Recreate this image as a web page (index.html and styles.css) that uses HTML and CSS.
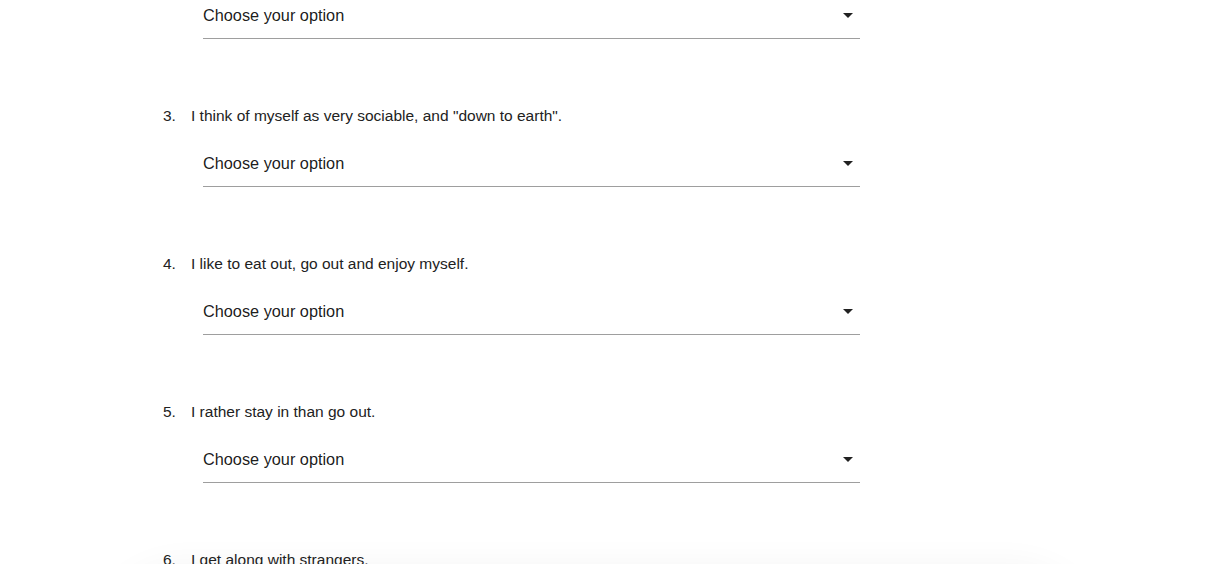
FILE: index.html
```html
<!DOCTYPE html>
<html lang="en">
<head>
<meta charset="utf-8">
<title>Questionnaire</title>
<link rel="stylesheet" href="styles.css">
</head>
<body>
<main class="page">
  <ol class="questions">
    <li class="question question-partial">
      <div class="select">
        <span class="select-value">Choose your option</span>
        <svg class="caret" width="24" height="24" viewBox="0 0 24 24"><path d="M7 10l5 5 5-5z"/></svg>
      </div>
    </li>
    <li class="question">
      <div class="label"><span class="num">3.</span><span class="text">I think of myself as very sociable, and "down to earth".</span></div>
      <div class="select">
        <span class="select-value">Choose your option</span>
        <svg class="caret" width="24" height="24" viewBox="0 0 24 24"><path d="M7 10l5 5 5-5z"/></svg>
      </div>
    </li>
    <li class="question">
      <div class="label"><span class="num">4.</span><span class="text">I like to eat out, go out and enjoy myself.</span></div>
      <div class="select">
        <span class="select-value">Choose your option</span>
        <svg class="caret" width="24" height="24" viewBox="0 0 24 24"><path d="M7 10l5 5 5-5z"/></svg>
      </div>
    </li>
    <li class="question">
      <div class="label"><span class="num">5.</span><span class="text">I rather stay in than go out.</span></div>
      <div class="select">
        <span class="select-value">Choose your option</span>
        <svg class="caret" width="24" height="24" viewBox="0 0 24 24"><path d="M7 10l5 5 5-5z"/></svg>
      </div>
    </li>
    <li class="question">
      <div class="label"><span class="num">6.</span><span class="text">I get along with strangers.</span></div>
      <div class="select">
        <span class="select-value">Choose your option</span>
        <svg class="caret" width="24" height="24" viewBox="0 0 24 24"><path d="M7 10l5 5 5-5z"/></svg>
      </div>
    </li>
  </ol>
  <div class="fade-shadow"></div>
</main>
</body>
</html>
```

FILE: styles.css
```css
html, body {
  margin: 0;
  padding: 0;
  background: #ffffff;
  overflow: hidden;
}

body {
  font-family: "Liberation Sans", Arial, Helvetica, sans-serif;
  color: rgba(0, 0, 0, 0.87);
}

.page {
  position: relative;
  height: 564px;
  overflow: hidden;
}

.questions {
  list-style: none;
  margin: -9px 0 0 163px;
  padding: 0;
  width: 697px;
  position: relative;
  z-index: 1;
}

.question {
  display: flex;
  flex-direction: column;
  margin-bottom: 66px;
}

.label {
  display: flex;
  height: 22px;
  line-height: 22px;
  font-size: 15.5px;
  color: #222222;
  margin-bottom: 12px;
}

.num {
  width: 28px;
  flex: none;
}

.select {
  margin-left: 40px;
  height: 47px;
  border-bottom: 1px solid #9e9e9e;
  display: flex;
  align-items: center;
  justify-content: space-between;
  font-size: 16.3px;
  color: rgba(0, 0, 0, 0.9);
}

.select-value {
  line-height: 22px;
  padding-top: 1px;
}

.caret {
  display: block;
  fill: rgba(0, 0, 0, 0.87);
  flex: none;
}

.fade-shadow {
  position: absolute;
  left: 95px;
  width: 1005px;
  top: 568px;
  height: 200px;
  background: #ffffff;
  border-radius: 90px;
  box-shadow: 0 -4px 34px rgba(0, 0, 0, 0.045);
  z-index: 0;
}
```
